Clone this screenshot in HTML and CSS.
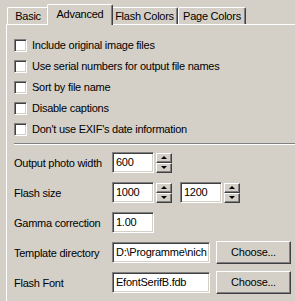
FILE: index.html
```html
<!DOCTYPE html>
<html>
<head>
<meta charset="utf-8">
<link rel="stylesheet" href="styles.css">
</head>
<body>
<div class="window">
  <div class="tabs">
    <div class="tab t-basic">Basic</div>
    <div class="tab active t-adv">Advanced</div>
    <div class="tab t-flash">Flash Colors</div>
    <div class="tab t-page">Page Colors</div>
  </div>
  <div class="panel">
    <div class="checks">
      <div class="check"><span class="box"></span><span>Include original image files</span></div>
      <div class="check"><span class="box"></span><span>Use serial numbers for output file names</span></div>
      <div class="check"><span class="box"></span><span>Sort by file name</span></div>
      <div class="check"><span class="box"></span><span>Disable captions</span></div>
      <div class="check"><span class="box"></span><span>Don't use EXIF's date information</span></div>
    </div>
    <div class="sep"></div>
    <div class="form">
      <div class="row">
        <span class="lbl">Output photo width</span>
        <div class="field num">600</div>
        <div class="spin"><span class="sb up"></span><span class="sb dn"></span></div>
      </div>
      <div class="row">
        <span class="lbl">Flash size</span>
        <div class="field num">1000</div>
        <div class="spin"><span class="sb up"></span><span class="sb dn"></span></div>
        <div class="field num second">1200</div>
        <div class="spin"><span class="sb up"></span><span class="sb dn"></span></div>
      </div>
      <div class="row">
        <span class="lbl">Gamma correction</span>
        <div class="field num">1.00</div>
      </div>
      <div class="row">
        <span class="lbl">Template directory</span>
        <div class="field wide">D:\Programme\nich</div>
        <div class="btn">Choose...</div>
      </div>
      <div class="row">
        <span class="lbl">Flash Font</span>
        <div class="field wide">EfontSerifB.fdb</div>
        <div class="btn">Choose...</div>
      </div>
    </div>
  </div>
</div>
</body>
</html>
```

FILE: styles.css
```css
html, body {
  margin: 0;
  padding: 0;
}
body {
  background: #d4d0c8;
  font: 11px "Liberation Sans", Arial, sans-serif;
  letter-spacing: -0.25px;
  color: #000;
  width: 295px;
  height: 301px;
  overflow: hidden;
}
.window {
  width: 295px;
  height: 301px;
  overflow: hidden;
}
.tabs {
  display: flex;
  align-items: flex-end;
  height: 24px;
  padding-left: 7px;
  position: relative;
  z-index: 1;
}
.tab {
  box-sizing: border-box;
  height: 17px;
  line-height: 16px;
  padding: 0;
  text-align: center;
  border-top: 1px solid #fff;
  border-left: 1px solid #fff;
  border-right: 1px solid #404040;
  box-shadow: inset -1px 0 #808080;
  border-radius: 2px 2px 0 0;
  white-space: nowrap;
  background: #d4d0c8;
  flex: none;
}
.t-basic { width: 42px; }
.t-adv { width: 66px; }
.t-flash { width: 67px; }
.t-page { width: 68px; }
.tab.active {
  height: 21px;
  line-height: 18px;
  margin: 0 -2px -1px -2px;
  position: relative;
  z-index: 2;
}
.panel {
  margin-left: 6px;
  border-top: 1px solid #fff;
  border-left: 1px solid #fff;
  padding: 10px 0 0 7px;
  height: 270px;
}
.checks {
  display: flex;
  flex-direction: column;
}
.check {
  display: flex;
  align-items: center;
  height: 21px;
  line-height: 21px;
  white-space: nowrap;
}
.box {
  width: 11px;
  height: 11px;
  background: #fff;
  border: 1px solid;
  border-color: #808080 #fff #fff #808080;
  box-shadow: inset 1px 1px #404040, inset -1px -1px #d4d0c8;
  margin-right: 5px;
  flex: none;
}
.sep {
  margin-top: 3px;
  border-top: 1px solid #808080;
  border-bottom: 1px solid #fff;
}
.form {
  display: flex;
  flex-direction: column;
  gap: 9px;
  margin-top: 7px;
}
.row {
  display: flex;
  align-items: center;
  height: 21px;
}
.lbl {
  width: 98px;
  flex: none;
  white-space: nowrap;
}
.field {
  box-sizing: border-box;
  height: 21px;
  line-height: 19px;
  background: #fff;
  border: 1px solid;
  border-color: #808080 #fff #fff #808080;
  box-shadow: inset 1px 1px #404040, inset -1px -1px #d4d0c8;
  padding-left: 3px;
  white-space: nowrap;
  overflow: hidden;
  flex: none;
}
.field.num {
  width: 42px;
}
.field.second {
  margin-left: 8px;
}
.field.wide {
  width: 98px;
}
.spin {
  display: flex;
  flex-direction: column;
  margin-left: 2px;
  flex: none;
}
.sb {
  box-sizing: border-box;
  width: 16px;
  height: 10px;
  border: 1px solid;
  border-color: #fff #404040 #404040 #fff;
  box-shadow: inset -1px -1px #808080;
  background: #d4d0c8;
  display: flex;
  align-items: center;
  justify-content: center;
}
.sb::after {
  content: "";
  width: 0;
  height: 0;
  border-left: 3px solid transparent;
  border-right: 3px solid transparent;
}
.sb.up::after {
  border-bottom: 3px solid #000;
  margin-bottom: 1px;
}
.sb.dn::after {
  border-top: 3px solid #000;
  margin-bottom: 1px;
}
.btn {
  box-sizing: border-box;
  width: 75px;
  height: 23px;
  margin-left: 6px;
  border: 1px solid;
  border-color: #fff #404040 #404040 #fff;
  box-shadow: inset -1px -1px #808080;
  text-align: center;
  line-height: 21px;
  flex: none;
}
```
